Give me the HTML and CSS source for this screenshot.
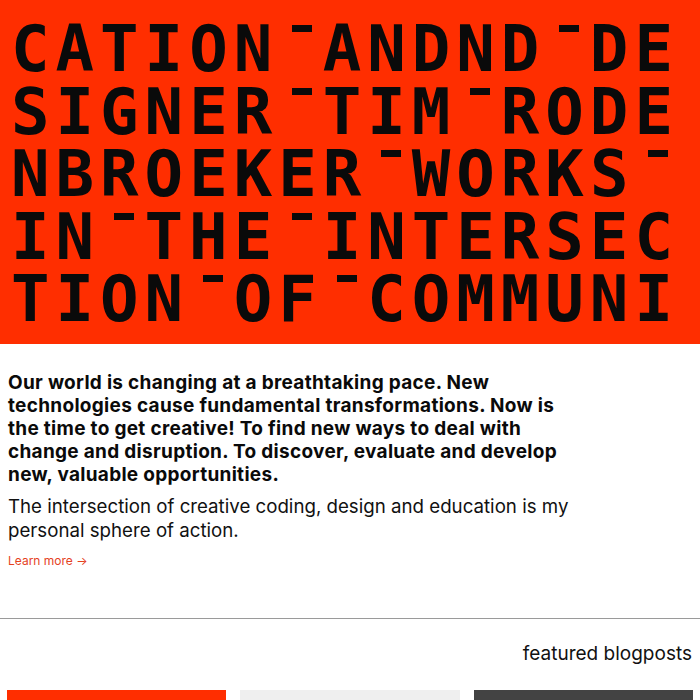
FILE: index.html
```html
<!DOCTYPE html>
<html lang="en">
<head>
<meta charset="utf-8">
<title>Tim Rodenbroeker</title>
<link rel="stylesheet" href="styles.css">
</head>
<body>
<header class="hero">
  <div class="hero-line">CATION<span class="sep"> </span>ANDND<span class="sep"> </span>DE</div>
  <div class="hero-line">SIGNER<span class="sep"> </span>TIM<span class="sep"> </span>RODE</div>
  <div class="hero-line">NBROEKER<span class="sep"> </span>WORKS<span class="sep"> </span></div>
  <div class="hero-line">IN<span class="sep"> </span>THE<span class="sep"> </span>INTERSEC</div>
  <div class="hero-line">TION<span class="sep"> </span>OF<span class="sep"> </span>COMMUNI</div>
</header>
<main>
  <section class="intro">
    <p class="lead">Our world is changing at a breathtaking pace. New technologies cause fundamental transformations. Now is the time to get creative! To find new ways to deal with change and disruption. To discover, evaluate and develop new, valuable opportunities.</p>
    <p class="sub">The intersection of creative coding, design and education is my personal sphere of action.</p>
    <a class="more" href="#">Learn more →</a>
  </section>
  <section class="featured">
    <h2 class="featured-title">featured blogposts</h2>
    <div class="cards">
      <div class="card card-red"></div>
      <div class="card card-light"></div>
      <div class="card card-dark"></div>
    </div>
  </section>
</main>
</body>
</html>
```

FILE: styles.css
```css
html, body {
  margin: 0;
  padding: 0;
  background: #fff;
}
body {
  font-family: Inter, "Liberation Sans", sans-serif;
  color: #111;
}
.hero {
  background: #ff2e00;
  padding: 18px 0 13px 11px;
  font-family: "DejaVu Sans Mono", monospace;
  font-weight: bold;
  font-size: 64px;
  line-height: 62.5px;
  letter-spacing: 6px;
  color: #0a0a0a;
  overflow: hidden;
}
.hero-line {
  height: 62.5px;
  white-space: pre;
}
.sep {
  display: inline-block;
  width: 44.5px;
  height: 62.5px;
  vertical-align: top;
  position: relative;
}
.sep::before {
  content: "";
  position: absolute;
  left: 14px;
  top: 7px;
  width: 20px;
  height: 7px;
  background: #0a0a0a;
}
.intro {
  padding: 27px 8px 0;
  display: flex;
  flex-direction: column;
  align-items: flex-start;
}
.lead {
  margin: 0;
  max-width: 570px;
  font-size: 19px;
  line-height: 23px;
  font-weight: 700;
  letter-spacing: 0.3px;
  color: #0a0a0a;
}
.sub {
  margin: 9px 0 0;
  max-width: 570px;
  font-size: 18.7px;
  line-height: 24px;
  font-weight: 400;
}
.more {
  margin-top: 10px;
  font-size: 12px;
  line-height: 16px;
  color: #e5421e;
  text-decoration: none;
}
.featured {
  margin-top: 49px;
  border-top: 1px solid #9a9a9a;
  padding: 23px 7px 0;
}
.featured-title {
  margin: 0;
  text-align: right;
  font-size: 19px;
  line-height: 24px;
  font-weight: 400;
  padding-right: 1px;
}
.cards {
  margin-top: 24px;
  display: grid;
  grid-template-columns: repeat(3, 1fr);
  gap: 14px;
}
.card {
  height: 220px;
}
.card-red { background: #ff2e00; }
.card-light { background: #efefef; }
.card-dark { background: #434343; }
```
